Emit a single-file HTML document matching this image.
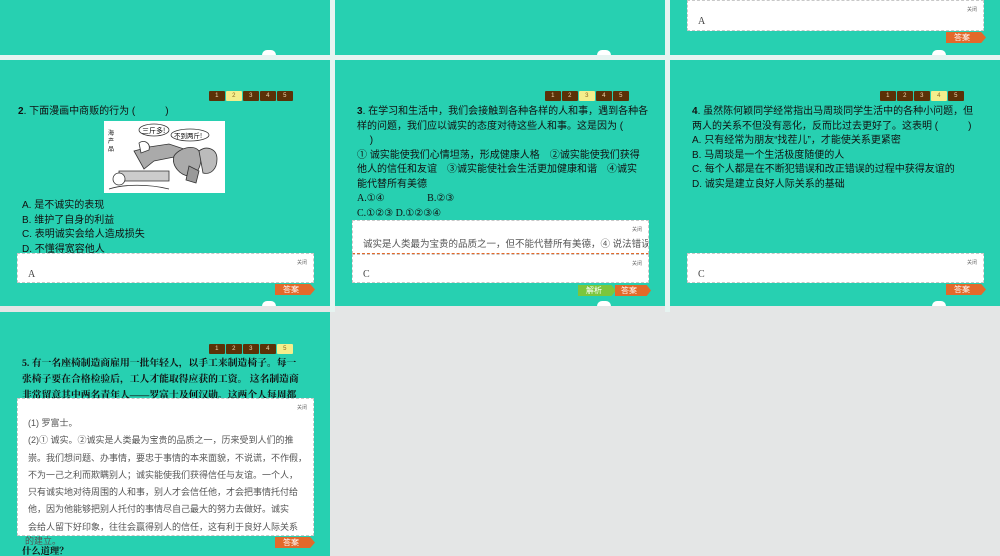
<!DOCTYPE html><html><head><meta charset="utf-8"><style>
*{margin:0;padding:0;box-sizing:border-box}
body{width:1000px;height:556px;background:#e4e6e6;position:relative;overflow:hidden;font-family:"Liberation Sans","Noto Sans CJK SC",sans-serif;color:#111}
.s{position:absolute;background:#27d0b1;overflow:hidden}
.a{position:absolute}
.nav{position:absolute;display:flex;gap:1.5px}
.nav span{width:15.5px;height:10px;background:#5b3107;color:#f0d9b0;font-size:6px;text-align:center;line-height:10px;border-radius:1px}
.nav span.on{background:#f4ee8c;color:#8a6a20}
.t{position:absolute;font-size:10px;line-height:14.5px;white-space:nowrap}
.box{position:absolute;background:#fff;border:1px dashed #c8c8c8}
.cl{position:absolute;right:6px;top:5px;font-size:5px;color:#666}
.ans{position:absolute;font-family:"Liberation Serif",serif;font-size:10px;color:#444}
.btn{position:absolute;height:11px;background:#e3692a;color:#fff;font-size:8px;line-height:11px;padding-left:8px;clip-path:polygon(0 0,88% 0,100% 50%,88% 100%,0 100%)}
.btn.g{background:#7cc63d}
.bump{position:absolute;width:14px;height:5px;background:#fff;border-radius:7px 7px 0 0}
</style></head><body>
<div style="position:absolute;left:0;top:55px;width:1000px;height:5px;background:#e6f4f1"></div>
<div style="position:absolute;left:330px;top:0;width:5px;height:312px;background:#e6f4f1"></div>
<div style="position:absolute;left:665px;top:0;width:5px;height:312px;background:#e6f4f1"></div>

<div class="s" style="left:0;top:0;width:330px;height:55px"><div class="bump" style="left:262px;bottom:0"></div></div>
<div class="s" style="left:335px;top:0;width:330px;height:55px"><div class="bump" style="left:262px;bottom:0"></div></div>
<div class="s" style="left:670px;top:0;width:330px;height:55px">
<div class="box" style="left:17px;top:0;width:297px;height:31px"><div class="cl">关闭</div><div class="ans" style="left:10px;top:15px">A</div></div>
<div class="btn" style="left:276px;top:32px;width:40px">答案</div>
<div class="bump" style="left:262px;bottom:0"></div></div>

<!-- slide 2 -->
<div class="s" style="left:0;top:60px;width:330px;height:246px">
<div class="nav" style="left:209px;top:31px"><span>1</span><span class="on">2</span><span>3</span><span>4</span><span>5</span></div>
<div class="t" style="left:18px;top:45px"><b>2</b>. 下面漫画中商贩的行为 (　　　)</div>
<div class="a" style="left:104px;top:61px;width:121px;height:72px;background:#fff">
<svg width="121" height="72"><g fill="#aaa" stroke="#333" stroke-width="0.8"><path d="M30 30l15-4 20-3 15 5-10 8-20 4-10 8z"/><path d="M70 35c5-8 20-12 25-5 5 8 0 25-10 25-8 0-18-10-15-20z"/><path d="M15 50h50v10h-50z" fill="#ccc"/><path d="M95 30c8-6 18-2 18 8 0 10-6 16-14 14z" fill="#bbb"/><path d="M85 45l10 5-3 12-10-3z" fill="#999"/></g><g fill="#fff" stroke="#333" stroke-width="0.8"><ellipse cx="50" cy="9" rx="15" ry="6"/><ellipse cx="86" cy="14" rx="19" ry="6"/><circle cx="15" cy="58" r="6"/><path d="M5 68c15-5 40-5 60 0"/><path d="M35 22c5-4 12 0 10 7l-8 3z"/></g>
<text x="38" y="12" font-size="7" fill="#000" font-family="Noto Sans CJK SC">三斤多!</text><text x="70" y="17" font-size="6.5" fill="#000" font-family="Noto Sans CJK SC">不到两斤!</text><text x="4" y="14" font-size="6" font-family="Noto Sans CJK SC">海</text><text x="4" y="22" font-size="6" font-family="Noto Sans CJK SC">产</text><text x="4" y="30" font-size="6" font-family="Noto Sans CJK SC">品</text></svg></div>
<div class="t" style="left:22px;top:139px">A. 是不诚实的表现<br>B. 维护了自身的利益<br>C. 表明诚实会给人造成损失<br>D. 不懂得宽容他人</div>
<div class="box" style="left:17px;top:193px;width:297px;height:30px"><div class="cl">关闭</div><div class="ans" style="left:10px;top:15px">A</div></div>
<div class="btn" style="left:275px;top:224px;width:40px">答案</div>
<div class="bump" style="left:262px;bottom:0"></div></div>

<!-- slide 3 -->
<div class="s" style="left:335px;top:60px;width:330px;height:246px">
<div class="nav" style="left:210px;top:31px"><span>1</span><span>2</span><span class="on">3</span><span>4</span><span>5</span></div>
<div class="t" style="left:22px;top:45px"><b>3</b>. 在学习和生活中，我们会接触到各种各样的人和事，遇到各种各<br>样的问题，我们应以诚实的态度对待这些人和事。这是因为 (<br>　 )<br>① 诚实能使我们心情坦荡，形成健康人格　②诚实能使我们获得<br>他人的信任和友谊　③诚实能使社会生活更加健康和谐　④诚实<br>能代替所有美德<br><span style="font-family:'Liberation Serif',serif">A.①④　　　　 B.②③<br>C.①②③ D.①②③④</span></div>
<div class="box" style="left:17px;top:160px;width:297px;height:34px;border-bottom:1px dashed #e3692a;overflow:hidden"><div class="cl">关闭</div><div class="t" style="left:10px;top:17px;color:#555;font-size:9.5px">诚实是人类最为宝贵的品质之一，但不能代替所有美德，④ 说法错误，</div></div>
<div class="box" style="left:17px;top:194px;width:297px;height:29px"><div class="cl">关闭</div><div class="ans" style="left:10px;top:14px">C</div></div>
<div class="btn g" style="left:243px;top:225px;width:38px">解析</div>
<div class="btn" style="left:280px;top:225px;width:36px;padding-left:6px">答案</div>
<div class="bump" style="left:262px;bottom:0"></div></div>

<!-- slide 4 -->
<div class="s" style="left:670px;top:60px;width:330px;height:246px">
<div class="nav" style="left:210px;top:31px"><span>1</span><span>2</span><span>3</span><span class="on">4</span><span>5</span></div>
<div class="t" style="left:22px;top:45px"><b>4</b>. 虽然陈何颖同学经常指出马周琰同学生活中的各种小问题，但<br>两人的关系不但没有恶化，反而比过去更好了。这表明 (　　　)<br>A. 只有经常为朋友“找茬儿”，才能使关系更紧密<br>B. 马周琰是一个生活极度随便的人<br>C. 每个人都是在不断犯错误和改正错误的过程中获得友谊的<br>D. 诚实是建立良好人际关系的基础</div>
<div class="box" style="left:17px;top:193px;width:297px;height:30px"><div class="cl">关闭</div><div class="ans" style="left:10px;top:15px">C</div></div>
<div class="btn" style="left:276px;top:224px;width:40px">答案</div>
<div class="bump" style="left:262px;bottom:0"></div></div>

<!-- slide 5 -->
<div class="s" style="left:0;top:312px;width:330px;height:244px">
<div class="nav" style="left:209px;top:32px"><span>1</span><span>2</span><span>3</span><span>4</span><span class="on">5</span></div>
<div class="t" style="left:22px;top:44px;line-height:16px;font-size:9.8px;font-family:'Liberation Serif','Noto Serif CJK SC',serif;font-weight:bold"><b>5</b>. 有一名座椅制造商雇用一批年轻人，以手工来制造椅子。每一<br>张椅子要在合格检验后，工人才能取得应获的工资。 这名制造商<br>非常留意其中两名青年人——罗富士及何汉勋。这两个人每周都</div>
<div class="box" style="left:17px;top:86px;width:297px;height:138px;overflow:hidden"><div class="cl">关闭</div>
<div class="t" style="left:10px;top:16px;color:#555;font-size:9px;line-height:17.3px">(1) 罗富士。<br>(2)① 诚实。②诚实是人类最为宝贵的品质之一，历来受到人们的推<br>崇。我们想问题、办事情，要忠于事情的本来面貌，不说谎，不作假，<br>不为一己之利而欺瞒别人；诚实能使我们获得信任与友谊。一个人，<br>只有诚实地对待周围的人和事，别人才会信任他，才会把事情托付给<br>他，因为他能够把别人托付的事情尽自己最大的努力去做好。诚实<br>会给人留下好印象，往往会赢得别人的信任，这有利于良好人际关系</div></div>
<div class="t" style="left:25px;top:222px;color:#555;font-size:9px">的建立。</div>
<div class="t" style="left:22px;top:233px;font-size:9.3px;font-family:'Liberation Serif','Noto Serif CJK SC',serif;font-weight:bold">什么道理？</div>
<div class="btn" style="left:275px;top:225px;width:40px">答案</div>
</div>
</body></html>
